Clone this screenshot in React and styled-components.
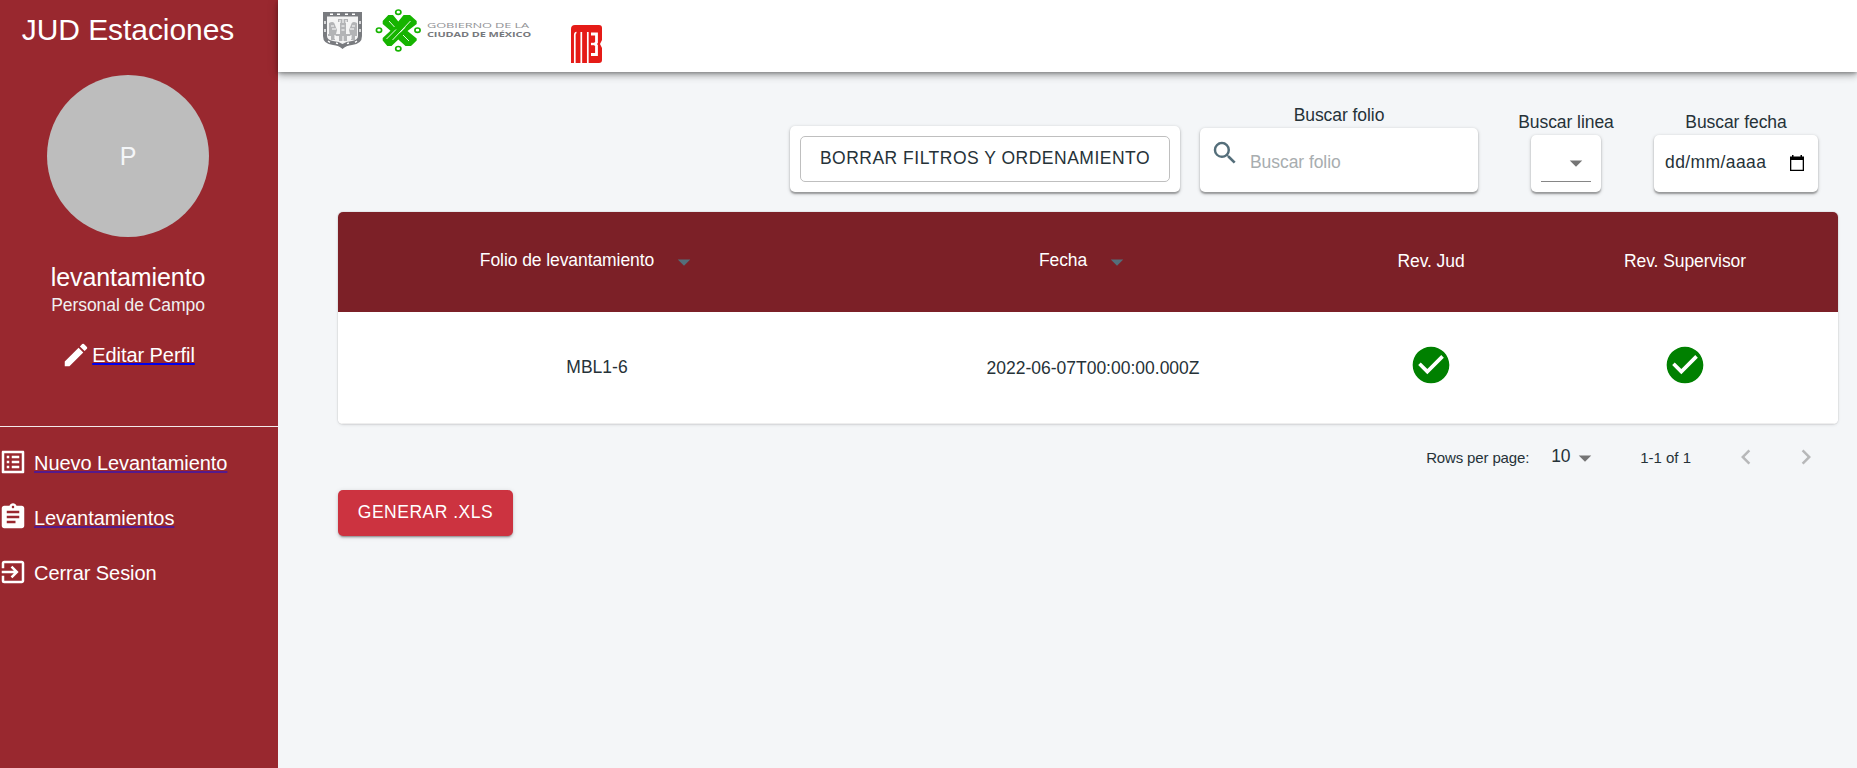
import React from "react";
import styled, { createGlobalStyle } from "styled-components";
import {
  MdEdit,
  MdListAlt,
  MdAssignment,
  MdExitToApp,
  MdSearch,
  MdArrowDropDown,
  MdCheckCircle,
  MdChevronLeft,
  MdChevronRight,
} from "react-icons/md";

const GlobalStyle = createGlobalStyle`
  *, *::before, *::after { box-sizing: border-box; }
  body {
    margin: 0;
    background: #f4f6f8;
    color: #263238;
    font-family: "Liberation Sans", Arial, sans-serif;
    font-size: 17.5px;
    letter-spacing: -0.0625px;
    overflow: hidden;
  }
  svg { display: block; flex: none; }
`;

const Page = styled.div`
  display: flex;
  width: 100%;
  height: 100vh;
`;

/* Sidebar */
const Sidebar = styled.aside`
  flex: none;
  width: 278px;
  background: #99282f;
  color: #fff;
`;

const Profile = styled.div`
  display: flex;
  flex-direction: column;
  align-items: center;
  width: 256px;
  height: 426px;
  padding-top: 12px;
`;

const PanelTitle = styled.h2`
  margin: 0 0 27px;
  font-size: 30px;
  line-height: 36px;
  font-weight: 400;
  letter-spacing: -0.075px;
`;

const Avatar = styled.div`
  display: flex;
  align-items: center;
  justify-content: center;
  width: 162px;
  height: 162px;
  margin-bottom: 25px;
  border-radius: 50%;
  background: #bdbdbd;
  color: #f4f6f8;
  font-size: 25px;
`;

const UserName = styled.div`
  font-size: 25px;
  line-height: 30px;
  letter-spacing: -0.075px;
`;

const UserRole = styled.div`
  line-height: 26px;
  color: #f0f0f0;
`;

const EditRow = styled.div`
  display: flex;
  align-items: center;
  gap: 1px;
  height: 30px;
  margin-top: 22px;
  font-size: 20px;
`;

const Nav = styled.nav`
  padding-top: 9px;
  border-top: 1px solid #f3eaea;
  font-size: 20px;
`;

const NavItem = styled.div`
  display: flex;
  align-items: center;
  gap: 6px;
  height: 55px;
  margin-left: -2px;

  svg { margin-bottom: 4px; }
`;

const Link = styled.a`
  color: #fff;
  text-decoration: ${(p) => (p.$line ? `underline ${p.$line}` : "none")};
  text-decoration-skip-ink: none;
`;

/* Main area */
const Main = styled.div`
  flex: 1;
  min-width: 0;
`;

const Header = styled.header`
  position: relative;
  display: flex;
  align-items: flex-start;
  height: 72px;
  padding: 8px 0 0 45px;
  background: #fff;
  box-shadow: 0 2.5px 5px -1px rgba(0, 0, 0, 0.2), 0 5px 6px rgba(0, 0, 0, 0.14),
    0 1px 12px rgba(0, 0, 0, 0.12), 0 1px 3px rgba(0, 0, 0, 0.2);
`;

const Shield = styled.svg`
  margin-top: 4px;
`;

const CityMark = styled.svg`
  margin-left: 12px;
`;

const Wordmark = styled.svg`
  margin: 8px 0 0 5px;
  font-family: "Open Sans", sans-serif;
`;

const MetroSlot = styled.div`
  margin: 17px 0 0 36px;
`;

const Content = styled.main`
  padding: 30px 19px 0 60px;
`;

const Filters = styled.div`
  display: flex;
  align-items: flex-end;
  height: 90px;
  padding-right: 20px;
  justify-content: flex-end;
`;

const Field = styled.div`
  display: flex;
  flex-direction: column;
  align-items: center;
  width: ${(p) => p.$width}px;
  margin-left: ${(p) => p.$gap}px;
`;

const Label = styled.label`
  line-height: 26px;
  white-space: nowrap;
`;

const Card = styled.div`
  display: flex;
  align-items: center;
  width: ${(p) => (p.$width ? `${p.$width}px` : "100%")};
  height: ${(p) => p.$height}px;
  padding: ${(p) => p.$pad || "0 10px"};
  border-radius: 5px;
  background: #fff;
  box-shadow: 0 1.25px 3.75px rgba(0, 0, 0, 0.22), 0 1.25px 1.5px rgba(0, 0, 0, 0.24);
`;

const OutlineButton = styled.button`
  width: 370px;
  height: 46px;
  padding: 0 0 1px;
  border: 1px solid #bfbfbf;
  border-radius: 5px;
  background: #fff;
  color: #263238;
  font: inherit;
  letter-spacing: 0.5px;
`;

const SearchIcon = styled(MdSearch)`
  margin: 0 10px 15px 0;
  color: #546e7a;
`;

const Placeholder = styled.span`
  padding-top: 4px;
  color: #a8adaf;
`;

const SelectLine = styled.div`
  display: flex;
  justify-content: flex-end;
  align-items: center;
  width: 50px;
  height: 37px;
  border-bottom: 1px solid #868686;
  color: #757575;
`;

const DateText = styled.span`
  flex: 1;
  color: #263238;
  letter-spacing: 0.4px;
`;

/* Table */
const TableCard = styled.section`
  height: 212px;
  margin-top: 20px;
  border-radius: 5px;
  background: #fff;
  box-shadow: 0 0 0 1px rgba(63, 63, 68, 0.05), 0 1px 3px rgba(63, 63, 68, 0.15);
  overflow: hidden;
`;

const Row = styled.div`
  display: grid;
  grid-template-columns: 518px 474px 202px 306px;
  align-items: center;
  justify-items: center;
  height: ${(p) => (p.$head ? 100 : 112)}px;
  background: ${(p) => (p.$head ? "#7c2027" : "#fff")};
  color: ${(p) => (p.$head ? "#fff" : "#263238")};
  letter-spacing: ${(p) => (p.$head ? "-0.08px" : "0")};
  border-bottom: ${(p) => (p.$head ? "none" : "1px solid #eeeeee")};
`;

const Cell = styled.div`
  display: flex;
  align-items: center;
  padding-top: ${(p) => p.$drop || 0}px;
  padding-bottom: ${(p) => p.$lift || 0}px;
`;

const SortIcon = styled(MdArrowDropDown)`
  margin: 2px 15px 0;
  color: #546e7a;
`;

const Pagination = styled.div`
  display: flex;
  align-items: center;
  justify-content: flex-end;
  height: 66px;
  padding-right: 17px;
  font-size: 15px;
  letter-spacing: 0;
`;

const PageSizeLabel = styled.span`
  letter-spacing: -0.14px;
`;

const PageSize = styled.div`
  display: flex;
  align-items: center;
  margin: 0 40px 0 22px;
  padding-bottom: 1px;
  font-size: 17.5px;
  letter-spacing: -0.3px;

  svg { color: #757575; margin-top: 2px; }
`;

const PagerIcons = styled.div`
  display: flex;
  gap: 30px;
  margin-left: 40px;
  color: #b7b8b9;
`;

const PrimaryButton = styled.button`
  width: 175px;
  height: 46px;
  padding: 0 0 1px;
  border: 0;
  border-radius: 5px;
  background: #cc3340;
  color: #fff;
  font: inherit;
  letter-spacing: 0.5px;
  box-shadow: 0 3px 1px -2px rgba(0, 0, 0, 0.2), 0 2px 2px rgba(0, 0, 0, 0.14),
    0 1px 5px rgba(0, 0, 0, 0.14);
`;

function ShieldLogo() {
  return (
    <Shield width="40" height="37" viewBox="0 0 40 37">
      <path d="M0 0H39V24Q39 32 29 33Q23 33.500 19.500 37Q16 33.500 10 33Q0 32 0 24Z" fill="#797b7f" />
      <path d="M4 4.500H35V24Q35 28 29 29Q23 29.500 19.500 32Q16 29.500 10 29Q4 28 4 24Z" fill="#f4f4f4" />
      <path
        d="M15 7h10v3h-2v12h-6V10h-2zM6 11q5-3 6 2l2 5-1 4H6zM34 11q-5-3-6 2l-2 5 1 4h7zM5 22h29v2H5zM8 24h4v4H8zM16 24h8v5h-8zM28 24h4v4h-4z"
        fill="#b3b4b6"
      />
      <path
        d="M17 8v3M20 7v4M23 8v3M18.500 14h3M18.500 18h3M8 14h3M9 17h4M29 14h3M27 17h4M12 23v4M20 24v6M28 23v4"
        stroke="#fff"
        fill="none"
      />
      <path
        d="M7 2.300h3M14 2.300h3M22 2.300h3M29 2.300h3M2 9v3M2 17v3M37 9v3M37 17v3M5 29l2 1.300M34 29l-2 1.300M13 31l2 .6M26 31l-2 .6"
        stroke="#fff"
        strokeWidth="1.400"
        fill="none"
      />
    </Shield>
  );
}

function CityLogo() {
  return (
    <CityMark width="47" height="45" viewBox="0 0 47 45">
      <path
        d="M7.700 13L13.300 7H18L23.300 13.500L28.600 7H35L41.700 13V16L32.500 23L41.700 30.500V32.500L36 38H30.500L23.300 31.500L16.500 38H12.300L7.700 32.500V30L15.500 22.700L7.700 16Z"
        fill="#16b400"
      />
      <path
        d="M14 13L19.500 19M28 27L34 33M17.500 32L35.500 13M11.500 31L21 21.500M25 24.500L30 19.500"
        stroke="#fff"
        strokeWidth="0.900"
        fill="none"
      />
      <g fill="#fff" stroke="#16b400" strokeWidth="1.700">
        <ellipse cx="23.300" cy="4.200" rx="2.600" ry="2.200" />
        <ellipse cx="23.300" cy="40.700" rx="2.600" ry="2.200" />
        <ellipse cx="4" cy="22.200" rx="2.600" ry="2.200" />
        <ellipse cx="42.500" cy="22.200" rx="2.600" ry="2.200" />
      </g>
    </CityMark>
  );
}

function GovernmentName() {
  return (
    <Wordmark width="108" height="24" viewBox="0 0 108 24">
      <text x="0" y="11.500" fontSize="7.5" fill="#919396" textLength="102" lengthAdjust="spacingAndGlyphs">
        GOBIERNO DE LA
      </text>
      <text x="0" y="20.500" fontSize="7.5" fontWeight="700" fill="#77797d" textLength="104" lengthAdjust="spacingAndGlyphs">
        CIUDAD DE MÉXICO
      </text>
    </Wordmark>
  );
}

function MetrobusLogo() {
  return (
    <MetroSlot>
      <svg width="31" height="38" viewBox="0 0 31 38">
        <path d="M4 0H28Q31 0 31 3V15L29 19L31 23V35Q31 38 28 38H0V4Q0 0 4 0Z" fill="#e51b17" />
        <path d="M3.800 38V10Q3.800 7.500 5.500 7.500M10.300 38V7M16.800 38V7" stroke="#fff" strokeWidth="1.700" fill="none" />
        <path d="M20 9H25.500V17.500L24 19L25.500 20.500V29.500H20" stroke="#fff" strokeWidth="2.800" fill="none" />
        <path d="M20 19H25" stroke="#fff" strokeWidth="2.400" />
      </svg>
    </MetroSlot>
  );
}

function CalendarIcon() {
  return (
    <svg width="14" height="16" viewBox="0 0 14 16">
      <path d="M0 1.500H2V0H3.500V1.500H10.500V0H12V1.500H14V16H0ZM1.300 5V14.700H12.700V5Z" fill="#000" fillRule="evenodd" />
    </svg>
  );
}

const columns = [
  { title: "Folio de levantamiento", sortable: true },
  { title: "Fecha", sortable: true },
  { title: "Rev. Jud" },
  { title: "Rev. Supervisor" },
];

export default function App() {
  return (
    <>
      <GlobalStyle />
      <Page>
        <Sidebar>
          <Profile>
            <PanelTitle>JUD Estaciones</PanelTitle>
            <Avatar>P</Avatar>
            <UserName>levantamiento</UserName>
            <UserRole>Personal de Campo</UserRole>
            <EditRow>
              <MdEdit size={30} />
              <Link $line="#0000ee">Editar Perfil</Link>
            </EditRow>
          </Profile>
          <Nav>
            <NavItem>
              <MdListAlt size={30} />
              <Link $line="#551a8b">Nuevo Levantamiento</Link>
            </NavItem>
            <NavItem>
              <MdAssignment size={30} />
              <Link $line="#551a8b">Levantamientos</Link>
            </NavItem>
            <NavItem>
              <MdExitToApp size={30} />
              <Link>Cerrar Sesion</Link>
            </NavItem>
          </Nav>
        </Sidebar>

        <Main>
          <Header>
            <ShieldLogo />
            <CityLogo />
            <GovernmentName />
            <MetrobusLogo />
          </Header>

          <Content>
            <Filters>
              <Card $width={390} $height={66}>
                <OutlineButton>BORRAR FILTROS Y ORDENAMIENTO</OutlineButton>
              </Card>
              <Field $width={278} $gap={20}>
                <Label>Buscar folio</Label>
                <Card $height={64}>
                  <SearchIcon size={30} />
                  <Placeholder>Buscar folio</Placeholder>
                </Card>
              </Field>
              <Field $width={96} $gap={40}>
                <Label>Buscar linea</Label>
                <Card $width={70} $height={57}>
                  <SelectLine>
                    <MdArrowDropDown size={30} />
                  </SelectLine>
                </Card>
              </Field>
              <Field $width={164} $gap={40}>
                <Label>Buscar fecha</Label>
                <Card $height={57} $pad="0 14px 2px 11px">
                  <DateText>dd/mm/aaaa</DateText>
                  <CalendarIcon />
                </Card>
              </Field>
            </Filters>

            <TableCard>
              <Row $head>
                {columns.map((c) => (
                  <Cell key={c.title} $lift={c.sortable ? 3 : 1}>
                    {c.title}
                    {c.sortable && <SortIcon size={30} />}
                  </Cell>
                ))}
              </Row>
              <Row>
                <Cell>MBL1-6</Cell>
                <Cell $drop={2}>2022-06-07T00:00:00.000Z</Cell>
                <Cell $lift={6}>
                  <MdCheckCircle size={44} color="#008000" />
                </Cell>
                <Cell $lift={6}>
                  <MdCheckCircle size={44} color="#008000" />
                </Cell>
              </Row>
            </TableCard>

            <Pagination>
              <PageSizeLabel>Rows per page:</PageSizeLabel>
              <PageSize>
                10
                <MdArrowDropDown size={30} />
              </PageSize>
              <span>1-1 of 1</span>
              <PagerIcons>
                <MdChevronLeft size={30} />
                <MdChevronRight size={30} />
              </PagerIcons>
            </Pagination>

            <PrimaryButton>GENERAR .XLS</PrimaryButton>
          </Content>
        </Main>
      </Page>
    </>
  );
}
